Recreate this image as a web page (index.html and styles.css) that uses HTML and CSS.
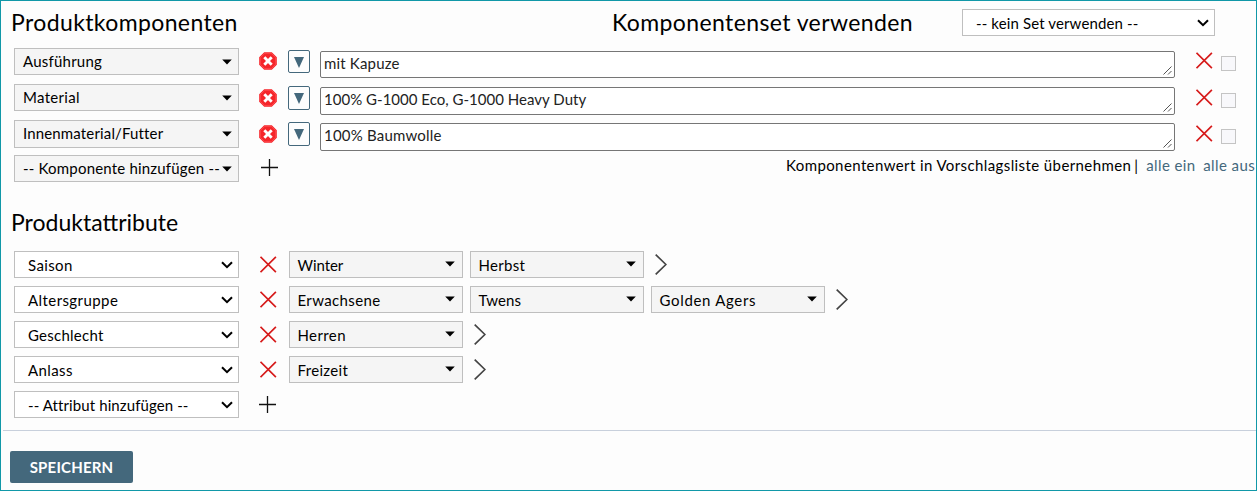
FILE: index.html
```html
<!DOCTYPE html>
<html lang="de">
<head>
<meta charset="utf-8">
<title>Produktkomponenten</title>
<link rel="stylesheet" href="styles.css">
</head>
<body>
<svg width="0" height="0" class="defs">
  <symbol id="caret" viewBox="0 0 10 6"><path d="M.2.4h9.6L5 5.6z" fill="#000"/></symbol>
  <symbol id="chev" viewBox="0 0 12 8"><path d="M1 1.2l5 5 5-5" fill="none" stroke="#000" stroke-width="2"/></symbol>
  <symbol id="stop" viewBox="0 0 18 18"><path d="M5.2.2h7.6l5 5v7.6l-5 5H5.2l-5-5V5.200z" fill="#f5252a"/><path d="M5.700 1.300h6.600l4.400 4.400v6.600l-4.400 4.400H5.700L1.300 12.300V5.700z" fill="none" stroke="#ff5557" stroke-width=".7"/><path d="M5.300 5.300l7.400 7.400M12.700 5.300l-7.400 7.400" stroke="#fff" stroke-width="2.900"/></symbol>
  <symbol id="del" viewBox="0 0 17 17"><path d="M.5.8l15.400 15.400M15.900.8L.5 16.200" stroke="#d61a1a" stroke-width="1.700"/></symbol>
  <symbol id="plus" viewBox="0 0 17 17"><path d="M8.500 0v17M0 8.500h17" stroke="#111" stroke-width="1.300"/></symbol>
  <symbol id="next" viewBox="0 0 12 21"><path d="M.7.7l10.200 9.800L.7 20.300" fill="none" stroke="#444" stroke-width="1.700"/></symbol>
  <symbol id="grip" viewBox="0 0 9 9"><path d="M.5 8.500l8-8M5 8.500L8.500 5" stroke="#555" stroke-width="1"/></symbol>
</svg>
<div class="panel">
  <header class="head">
    <h2 class="title k-comp">Produktkomponenten</h2>
    <h2 class="title set-title k-set">Komponentenset verwenden</h2>
    <div class="select set"><span class="k-kein">-- kein Set verwenden --</span><svg class="chev"><use href="#chev"/></svg></div>
  </header>

  <section class="components">
    <div class="comp">
      <div class="select gray"><span class="k-ausf">Ausführung</span><svg class="caret"><use href="#caret"/></svg></div>
      <svg class="stop"><use href="#stop"/></svg>
      <div class="drop"><i></i></div>
      <div class="area"><span class="k-kap">mit Kapuze</span><svg class="grip"><use href="#grip"/></svg></div>
      <svg class="del"><use href="#del"/></svg>
      <div class="check"></div>
    </div>
    <div class="comp second">
      <div class="select gray"><span class="k-mat">Material</span><svg class="caret"><use href="#caret"/></svg></div>
      <svg class="stop"><use href="#stop"/></svg>
      <div class="drop"><i></i></div>
      <div class="area"><span class="k-eco">100% G-1000 Eco, G-1000 Heavy Duty</span><svg class="grip"><use href="#grip"/></svg></div>
      <svg class="del"><use href="#del"/></svg>
      <div class="check"></div>
    </div>
    <div class="comp third">
      <div class="select gray"><span class="k-inn">Innenmaterial/Futter</span><svg class="caret"><use href="#caret"/></svg></div>
      <svg class="stop"><use href="#stop"/></svg>
      <div class="drop"><i></i></div>
      <div class="area"><span class="k-baum">100% Baumwolle</span><svg class="grip"><use href="#grip"/></svg></div>
      <svg class="del"><use href="#del"/></svg>
      <div class="check"></div>
    </div>
    <div class="add">
      <div class="select gray"><span class="k-addk">-- Komponente hinzufügen --</span><svg class="caret"><use href="#caret"/></svg></div>
      <svg class="plus"><use href="#plus"/></svg>
      <div class="suggest"><span class="k-vor">Komponentenwert in Vorschlagsliste übernehmen</span><span class="bar">|</span><a class="k-ein">alle ein</a><a class="aus k-aus">alle aus</a></div>
    </div>
  </section>

  <h2 class="title attr-title k-attr">Produktattribute</h2>
  <section class="attributes">
    <div class="attr">
      <div class="select"><span class="k-sai">Saison</span><svg class="chev"><use href="#chev"/></svg></div>
      <svg class="del"><use href="#del"/></svg>
      <div class="select gray value"><span class="k-win">Winter</span><svg class="caret"><use href="#caret"/></svg></div>
      <div class="select gray value"><span class="k-herb">Herbst</span><svg class="caret"><use href="#caret"/></svg></div>
      <svg class="next"><use href="#next"/></svg>
    </div>
    <div class="attr">
      <div class="select"><span class="k-alt">Altersgruppe</span><svg class="chev"><use href="#chev"/></svg></div>
      <svg class="del"><use href="#del"/></svg>
      <div class="select gray value"><span class="k-erw">Erwachsene</span><svg class="caret"><use href="#caret"/></svg></div>
      <div class="select gray value"><span class="k-twe">Twens</span><svg class="caret"><use href="#caret"/></svg></div>
      <div class="select gray value"><span class="k-gold">Golden Agers</span><svg class="caret"><use href="#caret"/></svg></div>
      <svg class="next"><use href="#next"/></svg>
    </div>
    <div class="attr">
      <div class="select"><span class="k-ges">Geschlecht</span><svg class="chev"><use href="#chev"/></svg></div>
      <svg class="del"><use href="#del"/></svg>
      <div class="select gray value"><span class="k-herr">Herren</span><svg class="caret"><use href="#caret"/></svg></div>
      <svg class="next"><use href="#next"/></svg>
    </div>
    <div class="attr">
      <div class="select"><span class="k-anl">Anlass</span><svg class="chev"><use href="#chev"/></svg></div>
      <svg class="del"><use href="#del"/></svg>
      <div class="select gray value"><span class="k-frei">Freizeit</span><svg class="caret"><use href="#caret"/></svg></div>
      <svg class="next"><use href="#next"/></svg>
    </div>
    <div class="attr">
      <div class="select"><span class="k-adda">-- Attribut hinzufügen --</span><svg class="chev"><use href="#chev"/></svg></div>
      <svg class="plus"><use href="#plus"/></svg>
    </div>
  </section>

  <footer class="foot"><button class="save">SPEICHERN</button></footer>
</div>
</body>
</html>
```

FILE: styles.css
```css
* { box-sizing: border-box; }
body { margin: 0; font: 15px/18px Lato, "Open Sans", sans-serif; color: #000; background: #fdfdfd; }
.defs { display: none; }
svg { display: block; flex: none; }
.panel { width: 1257px; height: 491px; border: 1px solid #1198a8; overflow: hidden; }

.head { display: flex; height: 47px; padding-left: 10px; }
.title { margin: 0; padding-top: 7px; font-size: 23px; line-height: 28px; font-weight: 400; white-space: nowrap; }
.head .title { width: 601px; }
.head .set-title { width: 350px; }
.attr-title { padding: 26px 0 0 10px; height: 69px; }

.select { display: flex; align-items: center; justify-content: space-between; flex: none; width: 225px; height: 27px; padding: 0 5px 0 13px; border: 1px solid #bfbfbf; background: #fff; white-space: nowrap; }
.select.gray { padding: 0 6px 0 8px; background: #f5f5f5; }
.components .select span { margin-bottom: 2px; }
.select.set { width: 253px; margin-top: 8px; }
.select.value { width: 174px; margin-right: 7px; padding: 0 7px 0 7.500px; }
.value .caret { margin-bottom: 1px; }
.caret { width: 10px; height: 6px; }
.chev { width: 12px; height: 8px; }

.comp { display: flex; align-items: flex-start; height: 36px; padding-left: 13px; }
.comp.third { height: 35px; }
.third .select { height: 28px; }
.stop { width: 18px; height: 18px; margin: 4px 11px 0 20px; }
.drop { display: flex; justify-content: center; flex: none; width: 22px; height: 23px; margin: 2px 10px 0 0; padding-top: 6px; border: 1px solid #44687c; border-radius: 2px; }
.drop i { width: 0; height: 0; border: 5.500px solid transparent; border-top: 11px solid #44687c; border-bottom: 0; }
.area { position: relative; flex: none; width: 855px; height: 27px; margin-top: 3px; padding: 2px 0 0 3px; border: 1px solid #767676; border-radius: 2px; background: #fff; color: #222; }
.grip { position: absolute; right: 2px; bottom: 2px; width: 9px; height: 9px; }
.del, .plus { width: 17px; height: 17px; }
.comp .del { margin: 4px 8px 0 21px; }
.check { width: 15px; height: 15px; margin-top: 8px; border: 1px solid #c4c4c4; background: #f8f8fb; }
.second .stop, .second .del, .third .stop, .third .del { margin-top: 5px; }
.second .drop, .third .drop { height: 24px; }
.second .area, .third .area { height: 28px; }
.second .check, .third .check { margin-top: 9px; }

.add { display: flex; height: 27px; padding-left: 13px; }
.add .plus { margin: 4px 0 0 22px; }
.suggest { display: flex; flex: 1; margin-left: 508px; padding-top: 1px; white-space: nowrap; }
.bar { width: 12px; margin-left: 3px; }
.suggest a { width: 57px; color: #44687c; }

.attributes { height: 179px; padding-left: 13px; }
.attr { display: flex; height: 35px; }
.attr .del { margin: 5px 12px 0 21px; }
.attr .plus { margin: 5px 0 0 20px; }
.next { width: 12px; height: 21px; margin: 3px 0 0 4px; }

.foot { margin-left: 2px; padding: 20px 0 0 7px; border-top: 1px solid #c8d0dc; }
.save { display: block; width: 123px; height: 32px; padding: 0; border: 0; border-radius: 2px; background: #44687c; color: #fff; font: bold 15px/32px Lato, "Open Sans", sans-serif; letter-spacing: .2px; }

.k-comp { letter-spacing: .38px; }
.k-set { letter-spacing: .4px; }
.k-attr { letter-spacing: 0; }
.k-kein { letter-spacing: .13px; }
.k-ausf { letter-spacing: .22px; }
.k-mat { letter-spacing: .31px; }
.k-inn { letter-spacing: .15px; }
.k-addk { letter-spacing: .19px; }
.k-kap { letter-spacing: .18px; }
.k-eco { letter-spacing: .02px; }
.k-baum { letter-spacing: .2px; }
.k-vor { letter-spacing: .4px; }
.k-ein { letter-spacing: .4px; }
.k-aus { letter-spacing: .4px; }
.k-sai { letter-spacing: .38px; }
.k-alt { letter-spacing: .43px; }
.k-ges { letter-spacing: .25px; }
.k-anl { letter-spacing: .4px; }
.k-adda { letter-spacing: .1px; }
.k-win { letter-spacing: -.05px; }
.k-erw { letter-spacing: .37px; }
.k-herb { letter-spacing: .3px; }
.k-twe { letter-spacing: .1px; }
.k-gold { letter-spacing: .67px; }
.k-herr { letter-spacing: .4px; }
.k-frei { letter-spacing: .33px; }
```
